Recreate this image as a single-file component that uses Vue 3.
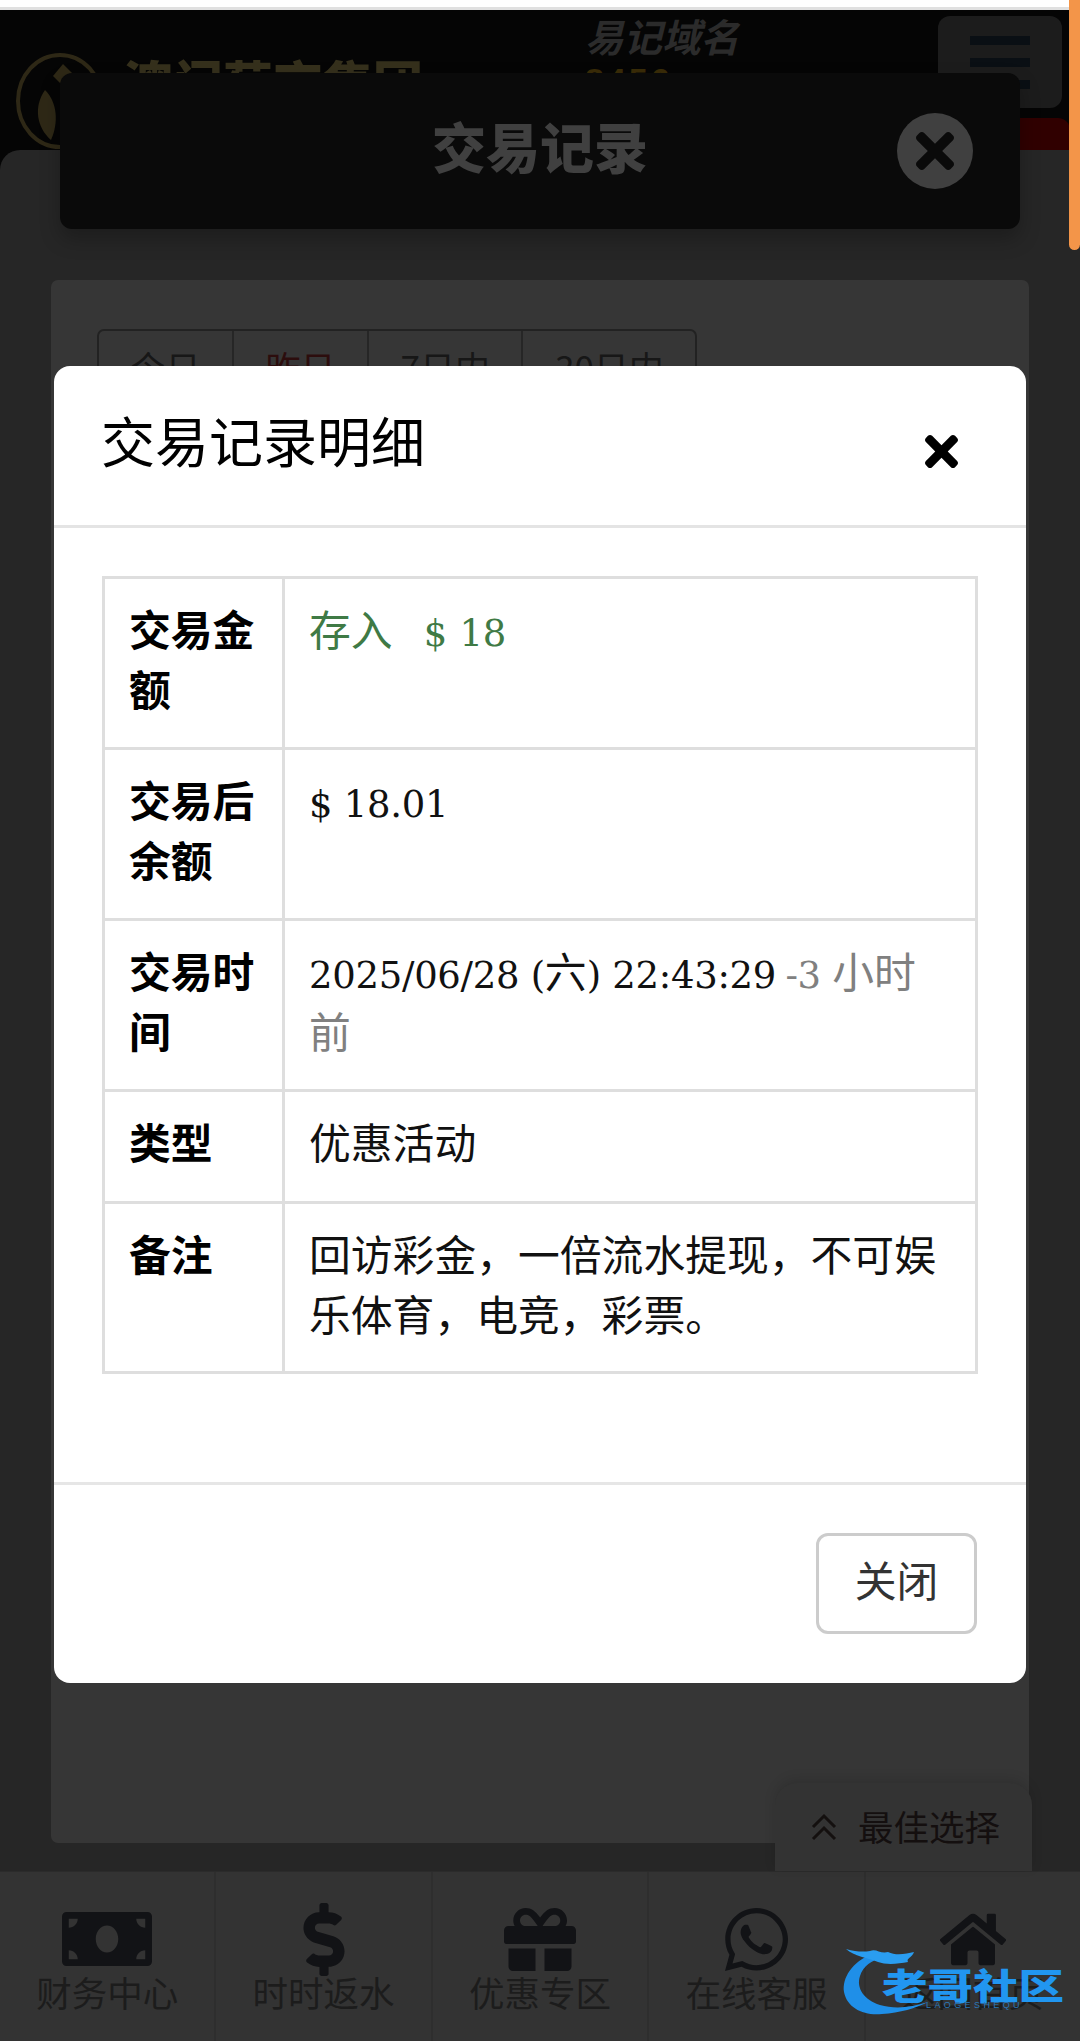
<script setup>
const tabs = [
  { label: '今日' },
  { label: '昨日', active: true },
  { label: '7日内' },
  { label: '30日内' },
];

const navItems = [
  { label: '财务中心', box: '0 64 640 384', w: 90, h: 54, d: 'M608 64H32C14.33 64 0 78.33 0 96v320c0 17.67 14.33 32 32 32h576c17.67 0 32-14.33 32-32V96c0-17.67-14.33-32-32-32zM48 400v-64c35.35 0 64 28.65 64 64H48zm0-224v-64h64c0 35.35-28.65 64-64 64zm272 176c-44.19 0-80-42.99-80-96 0-53.02 35.82-96 80-96s80 42.98 80 96c0 53.03-35.83 96-80 96zm272 48h-64c0-35.35 28.65-64 64-64v64zm0-224c-35.35 0-64-28.65-64-64h64v64z' },
  { label: '时时返水', box: '0 0 288 512', w: 42, h: 73, d: 'M209.2 233.4l-108-31.6C88.7 198.2 80 186.5 80 173.5c0-16.3 13.2-29.5 29.5-29.5h66.3c12.2 0 24.2 3.7 34.2 10.5 6.1 4.1 14.3 3.1 19.5-2l34.8-34c7.1-6.9 6.1-18.4-1.8-24.5C238 74.8 207.4 64.1 176 64V16c0-8.8-7.2-16-16-16h-32c-8.8 0-16 7.2-16 16v48h-2.5C45.8 64-5.4 118.7.5 183.6c4.2 46.1 39.4 83.6 83.8 96.6l102.5 30c12.5 3.7 21.2 15.3 21.2 28.3 0 16.3-13.2 29.5-29.5 29.5h-66.3C100 368 88 364.3 78 357.5c-6.1-4.1-14.3-3.1-19.5 2l-34.8 34c-7.1 6.9-6.1 18.4 1.8 24.5 24.5 19.2 55.1 29.9 86.5 30v48c0 8.8 7.2 16 16 16h32c8.8 0 16-7.2 16-16v-48.2c46.6-.9 90.3-28.6 105.7-72.7 21.5-61.6-14.6-124.8-72.5-141.7z' },
  { label: '优惠专区', box: '0 32 512 448', w: 72, h: 63, d: 'M32 448c0 17.7 14.3 32 32 32h160V320H32v128zm256 32h160c17.7 0 32-14.3 32-32V320H288v160zm192-320h-42.1c6.2-12.1 10.1-25.5 10.1-40 0-48.5-39.5-88-88-88-41.6 0-68.5 21.3-103 68.3-34.5-47-61.4-68.3-103-68.3-48.5 0-88 39.5-88 88 0 14.5 3.8 27.9 10.1 40H32c-17.7 0-32 14.3-32 32v80c0 8.8 7.2 16 16 16h480c8.8 0 16-7.2 16-16v-80c0-17.7-14.3-32-32-32zm-326.1 0c-22.1 0-40-17.9-40-40s17.9-40 40-40c19.9 0 34.6 3.3 86.1 80h-86.1zm206.1 0h-86.1c51.4-76.5 65.7-80 86.1-80 22.1 0 40 17.9 40 40s-17.9 40-40 40z' },
  { label: '在线客服', box: '0 32 448 448', w: 63, h: 63, d: 'M380.9 97.1C339 55.1 283.2 32 223.9 32c-122.4 0-222 99.6-222 222 0 39.1 10.2 77.3 29.6 111L0 480l117.7-30.9c32.4 17.7 68.9 27 106.1 27h.1c122.3 0 224.1-99.6 224.1-222 0-59.3-25.2-115-67.1-157zm-157 341.6c-33.2 0-65.7-8.9-94-25.7l-6.7-4-69.8 18.3L72 359.2l-4.4-7c-18.5-29.4-28.2-63.3-28.2-98.2 0-101.7 82.8-184.5 184.6-184.5 49.3 0 95.6 19.2 130.4 54.1 34.8 34.9 56.2 81.2 56.1 130.5 0 101.8-84.9 184.6-186.6 184.6zm101.2-138.2c-5.5-2.8-32.8-16.2-37.9-18-5.1-1.9-8.8-2.8-12.5 2.8-3.7 5.6-14.3 18-17.6 21.8-3.2 3.7-6.5 4.2-12 1.4-32.6-16.3-54-29.1-75.5-66-5.7-9.8 5.7-9.1 16.3-30.3 1.8-3.7.9-6.9-.5-9.7-1.4-2.8-12.5-30.1-17.1-41.2-4.5-10.8-9.1-9.3-12.5-9.5-3.2-.2-6.9-.2-10.6-.2-3.7 0-9.7 1.4-14.8 6.9-5.1 5.6-19.4 19-19.4 46.3 0 27.3 19.9 53.7 22.6 57.4 2.8 3.7 39.1 59.7 94.8 83.8 35.2 15.2 49 16.5 66.6 13.9 10.7-1.6 32.8-13.4 37.4-26.4 4.6-13 4.6-24.1 3.2-26.4-1.3-2.5-5-3.9-10.5-6.6z' },
  { label: '返回首页', box: '0 32 576 448', w: 66, h: 57, d: 'M280.37 148.26L96 300.11V464a16 16 0 0 0 16 16l112.06-.29a16 16 0 0 0 15.92-16V368a16 16 0 0 1 16-16h64a16 16 0 0 1 16 16v95.64a16 16 0 0 0 16 16.05L464 480a16 16 0 0 0 16-16V300L295.67 148.26a12.19 12.19 0 0 0-15.3 0zM571.6 251.47L488 182.56V44.05a12 12 0 0 0-12-12h-56a12 12 0 0 0-12 12v72.61L318.47 43a48 48 0 0 0-61 0L4.34 251.47a12 12 0 0 0-1.6 16.9l25.5 31A12 12 0 0 0 45.15 301l235.22-193.74a12.19 12.19 0 0 1 15.3 0L530.9 301a12 12 0 0 0 16.9-1.6l25.5-31a12 12 0 0 0-1.7-16.93z' },
];

const timesPath = 'M242.72 256l100.07-100.07c12.28-12.28 12.28-32.19 0-44.48l-22.24-22.24c-12.28-12.28-32.19-12.28-44.48 0L176 189.28 75.93 89.21c-12.28-12.28-32.19-12.28-44.48 0L9.21 111.45c-12.28 12.28-12.28 32.19 0 44.48L109.28 256 9.21 356.07c-12.28 12.28-12.28 32.19 0 44.48l22.24 22.24c12.28 12.28 32.2 12.28 44.48 0L176 322.72l100.07 100.07c12.28 12.28 32.2 12.28 44.48 0l22.24-22.24c12.28-12.28 12.28-32.19 0-44.48L242.72 256z';
</script>

<template>
  <div class="page">
    <div class="topline"></div>

    <header class="site-head">
      <svg class="logo" viewBox="0 0 90 98" width="90" height="98">
        <ellipse cx="45" cy="49" rx="42" ry="46" fill="none" stroke="#2e2816" stroke-width="4" />
        <path d="M30 38 C18 55 22 76 36 88 C44 70 42 50 30 38z" fill="#2e2816" />
        <path d="M48 12 L60 24 L48 34 L38 24z" fill="#2e2816" />
      </svg>
      <div class="brand">澳门葡京集团</div>
      <div class="domain">
        <div class="domain-title">易记域名</div>
        <div class="domain-num">8456</div>
      </div>
      <div class="toggler"><i></i><i></i><i></i></div>
      <div class="red-tab"></div>
    </header>

    <main class="main">
      <section class="panel">
        <div class="tabs">
          <span v-for="t in tabs" :key="t.label" class="tab" :class="{ active: t.active }">{{ t.label }}</span>
        </div>
      </section>
    </main>

    <nav class="bottom-nav">
      <a v-for="item in navItems" :key="item.label" class="nav-item">
        <span class="nav-icon">
          <svg :viewBox="item.box" :width="item.w" :height="item.h"><path :d="item.d" fill="#121316" /></svg>
        </span>
        <span class="nav-label">{{ item.label }}</span>
      </a>
    </nav>

    <div class="best-pick">
      <svg viewBox="0 0 28 30" width="28" height="30" fill="none" stroke="#14100f" stroke-width="3">
        <path d="M3 15 L14 4 L25 15" />
        <path d="M3 27 L14 16 L25 27" />
      </svg>
      <span>最佳选择</span>
    </div>

    <div class="record-head">
      <h2>交易记录</h2>
      <span class="round-close">
        <svg viewBox="0 80 352 352" width="38" height="38"><path :d="timesPath" fill="#0a0a0a" /></svg>
      </span>
    </div>

    <div class="scroll-thumb"></div>

    <div class="dialog">
      <div class="dialog-head">
        <h5>交易记录明细</h5>
        <svg viewBox="0 80 352 352" width="33" height="33"><path :d="timesPath" fill="#000" /></svg>
      </div>
      <div class="dialog-body">
        <table class="detail">
          <colgroup><col class="col-key" /><col /></colgroup>
          <tbody>
            <tr>
              <th>交易金额</th>
              <td class="green">存入&nbsp;&nbsp;&nbsp;<span class="num">$ 18</span></td>
            </tr>
            <tr>
              <th>交易后余额</th>
              <td><span class="num">$ 18.01</span></td>
            </tr>
            <tr>
              <th>交易时间</th>
              <td><span class="num">2025/06/28 (</span>六<span class="num">) 22:43:29</span> <span class="muted"><span class="num">-3</span> 小时前</span></td>
            </tr>
            <tr>
              <th>类型</th>
              <td>优惠活动</td>
            </tr>
            <tr>
              <th>备注</th>
              <td>回访彩金，一倍流水提现，不可娱乐体育，电竞，彩票。</td>
            </tr>
          </tbody>
        </table>
      </div>
      <div class="dialog-foot">
        <button class="btn-close" type="button"><span>关闭</span></button>
      </div>
    </div>

    <!-- community watermark in the corner -->
    <div class="watermark">
      <svg class="dragon" viewBox="0 0 100 70" width="100" height="70">
        <path d="M30 6 C10 14 0 30 2 44 C5 60 22 68 40 66 C58 65 74 60 86 54 C68 60 52 61 38 57 C22 52 14 40 18 28 C21 18 30 12 40 10z" fill="#1f8fe8" />
        <path d="M4 1 C14 4 22 4 28 3 C34 0 38 6 46 4 C54 8 64 6 72 4 C70 10 64 10 66 14 C56 16 44 17 36 14 C26 10 12 8 4 1z" fill="#2a9df0" />
      </svg>
      <div class="wm-cn">老哥社区</div>
      <div class="wm-en">LAOGESHEQU</div>
    </div>
  </div>
</template>

<style>
html, body { margin: 0; padding: 0; background: #000; }
</style>

<style scoped>
.page {
  position: relative;
  width: 1080px;
  height: 2041px;
  overflow: hidden;
  display: flex;
  flex-direction: column;
  background: #050505;
  font-family: "Noto Sans CJK SC", "Noto Sans", sans-serif;
}

.topline {
  height: 7px;
  background: #fff;
  border-bottom: 3px solid #e0e0e0;
  flex: none;
}

.site-head {
  position: relative;
  flex: none;
  height: 140px;
  overflow: hidden;
  display: flex;
  align-items: flex-start;
  padding-left: 15px;
  box-sizing: border-box;
}
.logo { margin-top: 42px; flex: none; }
.brand {
  margin: 35px 0 0 18px;
  font-size: 50px;
  line-height: 72px;
  font-weight: 900;
  color: #35301c;
  white-space: nowrap;
  width: 300px;
  flex: none;
}
.domain { margin-left: 162px; flex: none; width: 200px; }
.domain-title {
  font-size: 38.5px;
  line-height: 50px;
  font-weight: 700;
  font-style: italic;
  color: #2b2b2b;
}
.domain-num {
  font-family: "Liberation Sans", sans-serif;
  font-size: 34px;
  line-height: 40px;
  font-weight: 700;
  letter-spacing: 3px;
  color: #3a2c08;
}
.toggler {
  margin: 6px 18px 0 auto;
  width: 124px;
  height: 92px;
  box-sizing: border-box;
  padding-top: 20px;
  background: #1c1c1c;
  border-radius: 12px;
  display: flex;
  flex-direction: column;
  align-items: center;
  gap: 13px;
  flex: none;
}
.toggler i { display: block; width: 60px; height: 9px; background: #0a0f14; }
.red-tab {
  position: absolute;
  right: 10px;
  bottom: 0;
  width: 80px;
  height: 32px;
  background: #300000;
  border-radius: 0 12px 0 0;
}

.main {
  flex: 1;
  min-height: 0;
  background: #262626;
  border-radius: 20px 0 0 0;
  padding: 130px 51px 28px;
  display: flex;
}
.panel {
  flex: 1;
  background: #363636;
  border-radius: 7px;
  padding: 49px 46px;
}
.tabs {
  display: inline-flex;
  border: 2px solid #222;
  border-radius: 7px;
}
.tab {
  padding: 10px 31.5px;
  font-size: 35px;
  line-height: 52px;
  color: #171717;
  border-right: 2px solid #262626;
}
.tab:last-child { border-right: 0; }
.tab.active { color: #2c0d0d; }

.bottom-nav {
  flex: none;
  height: 170px;
  background: #333;
  display: flex;
  border-top: 1px solid #2b2b2b;
  box-sizing: border-box;
}
.nav-item {
  flex: 1;
  display: flex;
  flex-direction: column;
  align-items: center;
  border-right: 2px solid #2e2e2e;
}
.nav-item:last-child { border-right: 0; }
.nav-icon {
  height: 72px;
  margin-top: 31px;
  display: flex;
  align-items: center;
  justify-content: center;
}
.nav-label {
  font-size: 35.5px;
  line-height: 50px;
  margin-top: -8px;
  color: #1c1c1c;
  white-space: nowrap;
}

.best-pick {
  position: absolute;
  left: 775px;
  top: 1783px;
  width: 257px;
  height: 88px;
  box-sizing: border-box;
  padding: 0 0 0 35px;
  display: flex;
  align-items: center;
  gap: 20px;
  background: #333;
  border-radius: 22px 22px 0 0;
  box-shadow: 0 -4px 12px rgba(0, 0, 0, 0.12);
  font-size: 35.5px;
  color: #140f0f;
}
.best-pick span { margin-top: -4px; }

.record-head {
  position: absolute;
  left: 60px;
  top: 73px;
  width: 960px;
  height: 156px;
  background: #0a0a0a;
  border-radius: 12px;
  box-shadow: 0 10px 20px rgba(0, 0, 0, 0.25);
  display: flex;
  align-items: center;
  justify-content: center;
}
.record-head h2 {
  margin: -12px 0 0;
  font-size: 54px;
  font-weight: 900;
  color: #404040;
}
.round-close {
  position: absolute;
  left: 837px;
  top: 40px;
  width: 76px;
  height: 76px;
  border-radius: 50%;
  background: #404040;
  display: flex;
  align-items: center;
  justify-content: center;
}

.scroll-thumb {
  position: absolute;
  right: 0;
  top: 0;
  width: 11px;
  height: 250px;
  background: #f39549;
  border-radius: 0 0 6px 6px;
}

.dialog {
  position: absolute;
  left: 54px;
  top: 366px;
  width: 972px;
  height: 1317px;
  background: #fff;
  border-radius: 16px;
  display: flex;
  flex-direction: column;
  color: #111;
}
.dialog-head {
  flex: none;
  height: 162px;
  box-sizing: border-box;
  border-bottom: 3px solid #e4e4e4;
  padding: 0 68px 0 47px;
  display: flex;
  justify-content: space-between;
  align-items: center;
}
.dialog-head h5 {
  margin: -12px 0 0;
  font-size: 54px;
  font-weight: 400;
  color: #000;
}
.dialog-head svg { margin-top: 12px; }
.dialog-body {
  flex: 1;
  padding: 48px 48px 0;
}
.detail {
  width: 876px;
  table-layout: fixed;
  border-collapse: collapse;
  font-size: 41.8px;
  line-height: 60px;
}
.col-key { width: 180px; }
.detail th,
.detail td {
  border: 3px solid #dedede;
  padding: 19px 25px 29px 24px;
  text-align: left;
  vertical-align: top;
}
.detail th { font-weight: 700; color: #000; }
.detail tr:nth-child(4) th { padding-bottom: 30px; }
.detail tr:last-child th,
.detail tr:last-child td { padding-bottom: 28px; }
.num {
  font-family: "DejaVu Serif", serif;
  font-size: 37px;
  line-height: 1;
  letter-spacing: -0.3px;
}
.green { color: #3f7a45; word-spacing: 1px; }
.muted { color: #808080; word-spacing: 2px; }

.dialog-foot {
  flex: none;
  box-sizing: border-box;
  height: 201px;
  border-top: 3px solid #e6e6e6;
  padding: 48px 49px;
  display: flex;
  justify-content: flex-end;
}
.btn-close {
  width: 161px;
  height: 101px;
  background: #fff;
  border: 3px solid #ccc;
  border-radius: 12px;
  font-family: inherit;
  font-size: 41.8px;
  color: #333;
  padding: 0 0 9px;
}

.watermark {
  position: absolute;
  left: 842px;
  top: 1948px;
  width: 226px;
  height: 72px;
}
.dragon { position: absolute; left: 0; top: 0; }
.wm-cn {
  position: absolute;
  left: 40px;
  top: 13px;
  font-size: 45.5px;
  line-height: 46px;
  font-weight: 900;
  white-space: nowrap;
  color: #2196f0;
  transform: scaleY(0.8);
}
.wm-en {
  position: absolute;
  left: 84px;
  top: 52px;
  font-family: "Liberation Sans", sans-serif;
  font-size: 9px;
  line-height: 10px;
  letter-spacing: 3.4px;
  color: #2a78b8;
  white-space: nowrap;
}
</style>
